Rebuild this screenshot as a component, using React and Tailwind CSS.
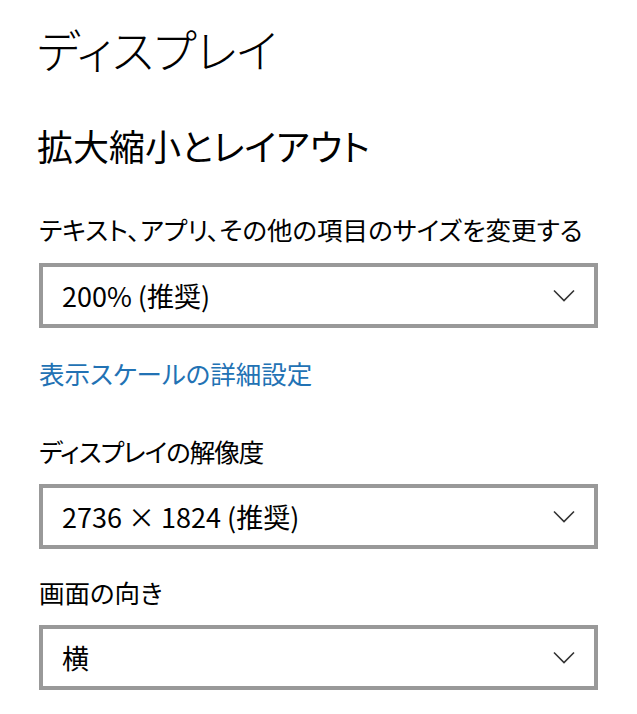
import React from 'react';

const jp = "font-['Noto_Sans_CJK_JP','Noto_Sans',sans-serif] [font-feature-settings:'palt']";

const Chevron = () => (
  <svg width="22" height="13" viewBox="0 0 22 13" fill="none" className="shrink-0">
    <path d="M1 1.5 L11 11.5 L21 1.5" stroke="#333" strokeWidth="1.6" />
  </svg>
);

const Dropdown = ({ value, className = '' }) => (
  <div
    className={`w-[559px] h-[65px] border-4 border-[#999999] bg-white flex items-center justify-between pl-[19px] pr-[19px] ${className}`}
  >
    <span className="text-[27px] leading-[38px] text-black whitespace-nowrap">{value}</span>
    <Chevron />
  </div>
);

const App = () => {
  return (
    <div className={`w-[637px] h-[714px] bg-white overflow-hidden ${jp}`}>
      <div className="flex flex-col pl-[37px] pt-[20px]">
        {/* page title */}
        <h1 className="text-[46px] leading-[56px] font-light text-black whitespace-nowrap">ディスプレイ</h1>

        {/* section header */}
        <h2 className="mt-[47px] text-[36px] leading-[44px] font-normal text-black whitespace-nowrap">拡大縮小とレイアウト</h2>

        <div className="mt-[44px] pl-[2px] text-[25.5px] leading-[36px] text-black whitespace-nowrap">
          テキスト、アプリ、その他の項目のサイズを変更する
        </div>
        <Dropdown value="200% (推奨)" className="mt-[16px] ml-[2px]" />

        <a className="mt-[27px] pl-[2px] text-[25.5px] leading-[36px] text-[#2272b4] whitespace-nowrap">
          表示スケールの詳細設定
        </a>

        <div className="mt-[42px] pl-[2px] text-[25.5px] leading-[36px] tracking-[-1px] text-black whitespace-nowrap">ディスプレイの解像度</div>
        <Dropdown value="2736 × 1824 (推奨)" className="mt-[15px] ml-[2px]" />

        <div className="mt-[25px] pl-[2px] text-[25.5px] leading-[36px] text-black whitespace-nowrap">画面の向き</div>
        <Dropdown value="横" className="mt-[15px] ml-[2px]" />
      </div>
    </div>
  );
};

export default App;
